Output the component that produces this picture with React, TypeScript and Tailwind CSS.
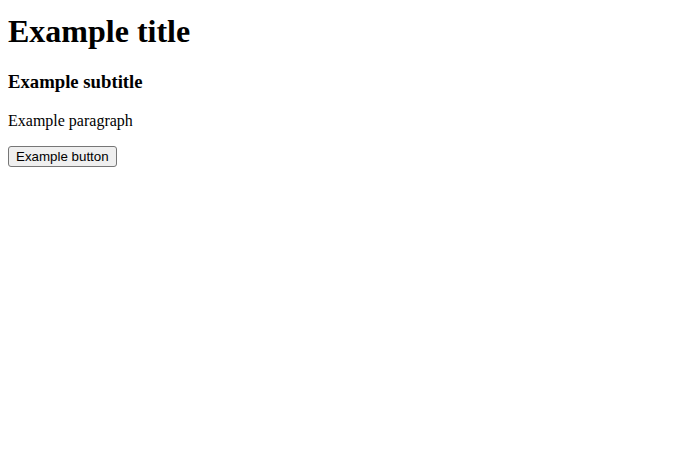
export default function App() {
  return (
    <div className="min-h-screen bg-white px-[8px] text-black font-['Liberation_Serif','Times_New_Roman',serif]">
      {/* Title */}
      <h1 className="pt-[13px] text-[32px] leading-[37px] font-bold">Example title</h1>

      {/* Subtitle */}
      <h3 className="mt-[21px] text-[18.72px] leading-[22px] font-bold">Example subtitle</h3>

      {/* Paragraph */}
      <p className="mt-[19px] text-[16px] leading-[18px]">Example paragraph</p>

      {/* Button */}
      <div className="mt-[14px]">
        <button className="rounded-[3px] border border-[#767676] bg-[#efefef] px-[7px] py-[2px] text-[13.333px] leading-[15px] font-['Liberation_Sans',Arial,sans-serif] text-black">
          Example button
        </button>
      </div>
    </div>
  )
}
